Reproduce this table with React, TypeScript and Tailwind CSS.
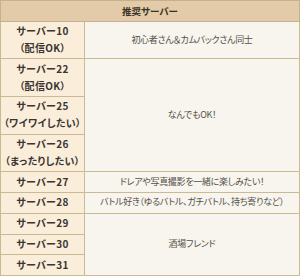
import React from "react";

type Row = {
  server: string[];
  note?: string;
  span?: number;
};

const rows: Row[] = [
  { server: ["サーバー10", "（配信OK）"], note: "初心者さん＆カムバックさん同士" },
  { server: ["サーバー22", "（配信OK）"], note: "なんでもOK！", span: 3 },
  { server: ["サーバー25", "（ワイワイしたい）"] },
  { server: ["サーバー26", "（まったりしたい）"] },
  { server: ["サーバー27"], note: "ドレアや写真撮影を一緒に楽しみたい！" },
  { server: ["サーバー28"], note: "バトル好き（ゆるバトル、ガチバトル、持ち寄りなど）" },
  { server: ["サーバー29"], note: "酒場フレンド", span: 3 },
  { server: ["サーバー30"] },
  { server: ["サーバー31"] },
];

const App = () => {
  return (
    <div className="w-[300px] h-[278px] bg-white font-['Noto_Sans_CJK_JP',sans-serif] [font-feature-settings:'palt']">
      <table className="w-[300px] table-fixed border-collapse border border-[#c2b38c] text-[10px] leading-[16.8px]">
        <colgroup>
          <col className="w-[84px]" />
          <col />
        </colgroup>
        <thead>
          <tr>
            <th
              colSpan={2}
              className="bg-[#e3caa8] border border-[#c2b38c] py-[1.5px] text-[9.5px] font-bold text-[#3a3326] text-center"
            >
              推奨サーバー
            </th>
          </tr>
        </thead>
        <tbody>
          {rows.map((row, i) => (
            <tr key={i}>
              <td className="bg-[#faeedb] border border-[#c9ba92] py-[1.5px] text-center font-bold text-[#3a3530] tracking-[0.3px] whitespace-nowrap">
                {row.server.map((line) => (
                  <div key={line}>{line}</div>
                ))}
              </td>
              {row.note && (
                <td
                  rowSpan={row.span ?? 1}
                  className="bg-[#f8f5ee] border border-[#c9ba92] py-[1.5px] px-1 text-center text-[9px] tracking-[-0.3px] text-[#555049] whitespace-nowrap"
                >
                  {row.note}
                </td>
              )}
            </tr>
          ))}
        </tbody>
      </table>
    </div>
  );
};

export default App;
